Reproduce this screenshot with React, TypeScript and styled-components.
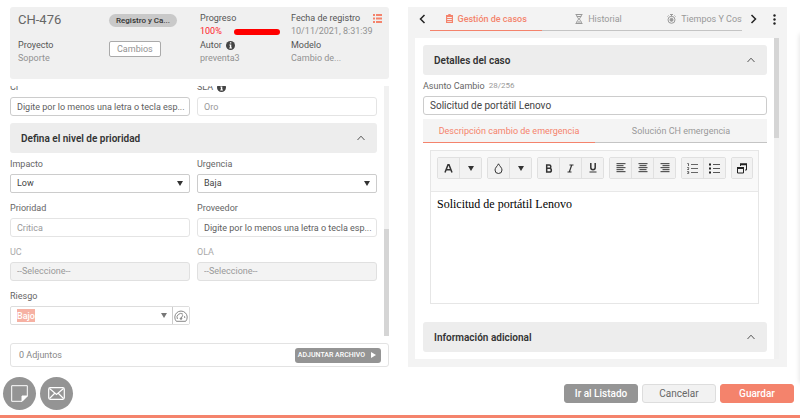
import React from "react";
import styled, { createGlobalStyle } from "styled-components";

const coral = "#f4836c";
const sans = `Roboto, "Liberation Sans", sans-serif`;

const GlobalStyle = createGlobalStyle`
  *, *::before, *::after { box-sizing: border-box; }
  body { margin: 0; background: #fff; font-family: ${sans}; font-size: 9px; color: #666; }
  button, input, select, textarea { font: inherit; color: inherit; margin: 0; }
  button { cursor: pointer; }
  svg { display: block; flex: none; }
`;

const Page = styled.div`
  position: relative;
  height: 100vh;
  min-height: 400px;
  display: flex;
  flex-direction: column;
  overflow: hidden;
  border-bottom: 3px solid ${coral};
`;

const DrawerEdge = styled.div`
  position: absolute;
  top: 34px;
  bottom: 32px;
  right: -4px;
  width: 4px;
  box-shadow: 0 0 5px rgba(0, 0, 0, 0.15);
`;

const Main = styled.main`
  flex: 1;
  min-height: 0;
  display: grid;
  grid-template-columns: 1fr 1fr;
  gap: 19px;
  padding: 7px 13px 0 10px;
`;

const LeftPane = styled.section`
  min-width: 0;
  min-height: 0;
  display: flex;
  flex-direction: column;
  gap: 7px;
`;

const Summary = styled.header`
  display: grid;
  grid-template-columns: repeat(4, 1fr);
  padding: 4px 7px 14px 8px;
  border-radius: 3px;
  background: #f0f0f0;
`;

const SummaryColumn = styled.div<{ $gap?: number }>`
  min-width: 0;
  display: flex;
  flex-direction: column;
  align-items: flex-start;
  gap: ${(p) => p.$gap ?? 0}px;
  line-height: 13px;
`;

const CaseId = styled.h1`
  margin: 0;
  font-size: 13px;
  font-weight: 400;
  line-height: 17px;
  color: #666;
  padding-bottom: 10px;
`;

const Term = styled.div`
  display: flex;
  align-items: center;
  justify-content: space-between;
  align-self: stretch;
  line-height: 14px;
  color: #555;
`;

const TermInline = styled(Term)`
  justify-content: flex-start;
  gap: 4px;
`;

const Detail = styled.div<{ $color?: string }>`
  white-space: nowrap;
  color: ${(p) => p.$color ?? "#929292"};
`;

const Pill = styled.div`
  margin-top: 3px;
  padding: 0 7px;
  border-radius: 7px;
  background: #c9c9c9;
  color: #333;
  font-size: 8px;
  font-weight: 500;
  white-space: nowrap;
`;

const Tag = styled.button`
  padding: 0 7px;
  border: 1px solid #aaa;
  border-radius: 2px;
  background: #fff;
  color: #929292;
  line-height: 14px;
`;

const ProgressLine = styled.div`
  display: flex;
  align-items: center;
  gap: 12px;
  color: #ff1a2a;
`;

const ProgressBar = styled.div`
  width: 46px;
  height: 6px;
  border-radius: 3px;
  background: #f00;
`;

const ListButton = styled.button`
  padding: 0;
  border: 0;
  background: none;
  color: ${coral};
`;

const ScrollRow = styled.div`
  flex: 1;
  min-height: 0;
  display: flex;
  gap: 7px;
`;

const FormArea = styled.div`
  flex: 1;
  min-width: 0;
  overflow: hidden;
  display: flex;
  flex-direction: column;
  justify-content: flex-end;
  padding-bottom: 11px;
`;

const FieldGrid = styled.div`
  display: grid;
  grid-template-columns: 1fr 1fr;
  gap: 8px 7px;
`;

const Field = styled.div`
  min-width: 0;
  display: flex;
  flex-direction: column;
  gap: 3px;
`;

const Label = styled.label<{ $muted?: boolean }>`
  display: flex;
  align-items: center;
  gap: 4px;
  height: 14px;
  line-height: 14px;
  color: ${(p) => (p.$muted ? "#aaa" : "#666")};
`;

const Counter = styled.span`
  font-size: 8px;
  color: #999;
`;

const TextInput = styled.input<{ $muted?: boolean; $strong?: boolean }>`
  width: 100%;
  height: 19px;
  padding: 0 2px 0 6px;
  border: 1px solid ${(p) => (p.$strong ? "#ccc" : "#e4e4e4")};
  border-radius: 3px;
  background: #fff;
  color: ${(p) => (p.$muted ? "#999" : "#606060")};
  outline: 0;
`;

const SubjectInput = styled(TextInput)`
  font-size: 10px;
  color: #444;
`;

const SelectBox = styled.div`
  position: relative;
`;

const Select = styled.select`
  appearance: none;
  display: block;
  width: 100%;
  height: 19px;
  padding: 0 6px;
  border: 1px solid #ccc;
  border-radius: 2px;
  background: #fff;
  color: #444;
  line-height: 17px;
  opacity: 1;
  &:disabled {
    border-color: #e0e0e0;
    border-radius: 3px;
    background: #f3f3f3;
    color: #999;
  }
`;

const SelectArrow = styled.span`
  position: absolute;
  right: 7px;
  top: 7px;
  color: #333;
  pointer-events: none;
`;

const Combo = styled.div`
  display: flex;
  align-items: stretch;
  height: 19px;
  border: 1px solid #ddd;
  border-radius: 2px;
  padding-left: 6px;
`;

const ComboInput = styled.input`
  field-sizing: content;
  align-self: center;
  height: 13px;
  padding: 0;
  border: 0;
  outline: 0;
  background: #f6b1a3;
  color: #fff;
  font-weight: 500;
`;

const ComboArrow = styled.button`
  margin-left: auto;
  padding: 0 5px;
  border: 0;
  background: none;
  color: #777;
`;

const ComboAction = styled.button`
  padding: 0 1px;
  border: 0;
  border-left: 1px solid #ccc;
  background: #fff;
  color: #888;
`;

const SectionBar = styled.button`
  display: flex;
  align-items: center;
  justify-content: space-between;
  width: 100%;
  height: 30px;
  flex: none;
  padding: 0 12px 0 11px;
  border: 0;
  border-radius: 3px;
  background: #ededed;
  color: #333;
  font-size: 10px;
  font-weight: 600;
  text-align: left;
`;

const FormSection = styled(SectionBar)`
  margin: 7px 0 4px;
`;

const Track = styled.div<{ $align: "start" | "end" }>`
  width: 5px;
  flex: none;
  display: flex;
  align-items: ${(p) => p.$align};
  background: #f1f1f1;
`;

const Thumb = styled.div<{ $size: string }>`
  width: 100%;
  height: ${(p) => p.$size};
  background: #d5d5d5;
`;

const Attachments = styled.div`
  display: flex;
  align-items: center;
  justify-content: space-between;
  height: 24px;
  padding: 0 7px 0 8px;
  border: 1px solid #e3e3e3;
  border-radius: 3px;
  color: #888;
`;

const AttachButton = styled.button`
  display: flex;
  align-items: center;
  justify-content: space-between;
  gap: 6px;
  height: 15px;
  padding: 0 5px 0 3px;
  border: 0;
  border-radius: 3px;
  background: #949494;
  color: #fff;
  font-size: 7px;
  font-weight: 500;
`;

const RightPane = styled.section`
  min-width: 0;
  min-height: 0;
  display: flex;
  flex-direction: column;
  padding-bottom: 8px;
  background: #f3f3f3;
`;

const TabBar = styled.nav`
  display: flex;
  height: 24px;
  flex: none;
  margin-bottom: 7px;
  padding-left: 7px;
`;

const NavButton = styled.button<{ $width: number }>`
  flex: none;
  width: ${(p) => p.$width}px;
  display: grid;
  place-items: center;
  padding: 0;
  border: 0;
  background: none;
  color: #222;
`;

const TabList = styled.div`
  flex: 1;
  min-width: 0;
  display: flex;
  margin-right: 3px;
  overflow: hidden;
`;

const Tab = styled.button<{ $active?: boolean }>`
  flex: 0 0 36%;
  display: flex;
  align-items: center;
  justify-content: center;
  gap: 5px;
  padding: 0;
  border: 0;
  border-bottom: 1px solid ${(p) => (p.$active ? coral : "#c4c4c4")};
  background: none;
  color: ${(p) => (p.$active ? coral : "#999")};
  font-weight: ${(p) => (p.$active ? 500 : 400)};
  white-space: nowrap;
`;

const InnerTabs = styled.div`
  display: grid;
  grid-template-columns: 1fr 1fr;
  flex: none;
  height: 24px;
  margin: 4px 0 7px;
  background: #f4f4f4;
`;

const InnerTab = styled(Tab)`
  font-weight: 400;
`;

const Body = styled.div`
  flex: 1;
  min-height: 0;
  display: flex;
  gap: 7px;
  margin: 0 8px 0 7px;
  background: #fff;
`;

const BodyContent = styled.div`
  flex: 1;
  min-width: 0;
  overflow: hidden;
  display: flex;
  flex-direction: column;
  padding: 7px 0 7px 8px;
`;

const SubjectField = styled(Field)`
  margin-top: 4px;
`;

const Editor = styled.div`
  flex: 1;
  min-height: 120px;
  display: flex;
  flex-direction: column;
  margin: 0 8px 18px 7px;
  border: 1px solid #e6e6e6;
`;

const EditorToolbar = styled.div`
  display: flex;
  gap: 5px;
  padding: 6px 6px 12px;
  border-bottom: 1px solid #e8e8e8;
  background: #f9f9f9;
`;

const ToolGroup = styled.div`
  display: flex;
  border: 1px solid #e0e0e0;
  border-radius: 2px;
`;

const Tool = styled.button`
  width: 21px;
  height: 20px;
  display: grid;
  place-items: center;
  padding: 0;
  border: 0;
  background: #f2f2f2;
  color: #333;
  &:only-child { width: 20px; }
  & + & { width: 22px; border-left: 1px solid #e0e0e0; }
`;

const EditorText = styled.textarea`
  flex: 1;
  width: 100%;
  padding: 5px 6px;
  border: 0;
  outline: 0;
  resize: none;
  background: #fff;
  color: #000;
  font-family: "Liberation Serif", serif;
  font-size: 12px;
  line-height: 15px;
`;

const Footer = styled.footer`
  flex: none;
  display: flex;
  align-items: center;
  gap: 4px;
  height: 48px;
  padding: 4px 6px 0 3px;
`;

const RoundButton = styled.button`
  width: 33px;
  height: 33px;
  display: grid;
  place-items: center;
  padding: 0;
  border: 0;
  border-radius: 50%;
  background: #949494;
  color: #fff;
`;

const Actions = styled.div`
  display: flex;
  gap: 4px;
  margin-left: auto;
`;

const tones = {
  gray: { bg: "#959595", fg: "#fff", line: "#959595", weight: 500 },
  light: { bg: "#f2f2f2", fg: "#666", line: "#ddd", weight: 400 },
  coral: { bg: coral, fg: "#fff", line: coral, weight: 500 },
};

const ActionButton = styled.button<{ $tone: keyof typeof tones }>`
  width: 74px;
  height: 19px;
  padding: 0;
  border: 1px solid ${(p) => tones[p.$tone].line};
  border-radius: 3px;
  background: ${(p) => tones[p.$tone].bg};
  color: ${(p) => tones[p.$tone].fg};
  font-size: 10px;
  font-weight: ${(p) => tones[p.$tone].weight};
`;

const Triangle = () => (
  <svg width="6" height="5" viewBox="0 0 6 5"><path d="M0 0h6L3 5z" fill="currentColor" /></svg>
);

const ChevronUp = () => (
  <svg width="8" height="6" viewBox="0 0 8 6" fill="none" stroke="#555" strokeWidth="1">
    <path d="M.5 5 4 1.2 7.5 5" />
  </svg>
);

const InfoIcon = () => (
  <svg width="9" height="9" viewBox="0 0 9 9">
    <circle cx="4.5" cy="4.5" r="4.5" fill="#444" />
    <path d="M3.9 1.3h1.4v1.2H3.9zM3.4 3.4h1.9v3.1h.6v1H3.3v-1h.6V4.4h-.5z" fill="#fff" />
  </svg>
);

const AlignIcon = ({ kind }: { kind: "left" | "center" | "right" }) => (
  <svg width="10" height="10" viewBox="0 0 10 10" stroke="#555" strokeWidth="1.2">
    {[0, 1, 2, 3, 4].map((i) => {
      const length = i % 2 ? 7 : 9;
      const start = kind === "left" ? 0.5 : kind === "right" ? 9.5 - length : 5 - length / 2;
      return <path key={i} d={`M${start} ${i * 2 + 0.6}h${length}`} />;
    })}
  </svg>
);

type SelectFieldProps = { id: string; label: string; value: string; disabled?: boolean };

const SelectField = ({ id, label, value, disabled }: SelectFieldProps) => (
  <Field>
    <Label htmlFor={id} $muted={disabled}>{label}</Label>
    <SelectBox>
      <Select id={id} disabled={disabled} defaultValue={value}><option>{value}</option></Select>
      {!disabled && <SelectArrow><Triangle /></SelectArrow>}
    </SelectBox>
  </Field>
);

type TextFieldProps = { id: string; label: string; value: string; muted?: boolean; strong?: boolean; info?: boolean };

const TextField = ({ id, label, value, muted, strong, info }: TextFieldProps) => (
  <Field>
    <Label htmlFor={id}>{label}{info && <InfoIcon />}</Label>
    <TextInput id={id} defaultValue={value} $muted={muted} $strong={strong} />
  </Field>
);

export default function App() {
  return (
    <>
      <GlobalStyle />
      <Page>
        <Main>
          <LeftPane>
            <Summary>
              <SummaryColumn>
                <CaseId>CH-476</CaseId>
                <Term>Proyecto</Term>
                <Detail>Soporte</Detail>
              </SummaryColumn>
              <SummaryColumn $gap={14}>
                <Pill>Registro y Ca...</Pill>
                <Tag type="button">Cambios</Tag>
              </SummaryColumn>
              <SummaryColumn>
                <Term>Progreso</Term>
                <ProgressLine>100%<ProgressBar role="progressbar" aria-label="Progreso" aria-valuenow={100} /></ProgressLine>
                <TermInline>Autor<InfoIcon /></TermInline>
                <Detail>preventa3</Detail>
              </SummaryColumn>
              <SummaryColumn>
                <Term>
                  Fecha de registro
                  <ListButton type="button" aria-label="Lista">
                    <svg width="9" height="9" viewBox="0 0 9 9" fill="currentColor">
                      <path d="M0 0h2v2H0zM3 0h6v2H3zM0 3.5h2v2H0zM3 3.5h6v2H3zM0 7h2v2H0zM3 7h6v2H3z" />
                    </svg>
                  </ListButton>
                </Term>
                <Detail>10/11/2021, 8:31:39</Detail>
                <Term>Modelo</Term>
                <Detail>Cambio de...</Detail>
              </SummaryColumn>
            </Summary>

            <ScrollRow>
              <FormArea>
                <FieldGrid>
                  <TextField id="ci" label="CI" value="Digite por lo menos una letra o tecla esp..." strong />
                  <TextField id="sla" label="SLA" value="Oro" muted info />
                </FieldGrid>
                <FormSection type="button" aria-expanded="true">Defina el nivel de prioridad<ChevronUp /></FormSection>
                <FieldGrid>
                  <SelectField id="impacto" label="Impacto" value="Low" />
                  <SelectField id="urgencia" label="Urgencia" value="Baja" />
                  <TextField id="prioridad" label="Prioridad" value="Critica" muted />
                  <TextField id="proveedor" label="Proveedor" value="Digite por lo menos una letra o tecla esp..." />
                  <SelectField id="uc" label="UC" value="--Seleccione--" disabled />
                  <SelectField id="ola" label="OLA" value="--Seleccione--" disabled />
                  <Field>
                    <Label htmlFor="riesgo">Riesgo</Label>
                    <Combo>
                      <ComboInput id="riesgo" role="combobox" aria-expanded="false" defaultValue="Bajo" />
                      <ComboArrow type="button" aria-label="Abrir opciones"><Triangle /></ComboArrow>
                      <ComboAction type="button" aria-label="Calcular riesgo">
                        <svg width="14" height="12" viewBox="0 0 14 12" fill="none" stroke="currentColor">
                          <path d="M2.3 11.3a6.2 6.2 0 1 1 9.4 0z" />
                          <path d="M3.4 9A3.8 3.8 0 0 1 9 4.2M10.5 6.2 10.8 8M7 8.6l1.8-3.4" />
                          <circle cx="7" cy="8.6" r=".8" fill="currentColor" />
                        </svg>
                      </ComboAction>
                    </Combo>
                  </Field>
                </FieldGrid>
              </FormArea>
              <Track $align="end"><Thumb $size="43%" /></Track>
            </ScrollRow>

            <Attachments>
              0 Adjuntos
              <AttachButton type="button">
                ADJUNTAR ARCHIVO
                <svg width="5" height="6" viewBox="0 0 5 6"><path d="M0 0 5 3 0 6z" fill="currentColor" /></svg>
              </AttachButton>
            </Attachments>
          </LeftPane>

          <RightPane>
            <TabBar>
              <NavButton type="button" $width={15} aria-label="Anterior">
                <svg width="7" height="10" viewBox="0 0 7 10" fill="none" stroke="currentColor" strokeWidth="1.5"><path d="M5.5 1 1.5 5l4 4" /></svg>
              </NavButton>
              <TabList>
                <Tab type="button" $active>
                  <svg width="7" height="9" viewBox="0 0 7 9" fill="currentColor">
                    <path fillRule="evenodd" d="M2.3 0h2.4v1H7v8H0V1h2.3zM1.2 3v1h4.6V3zM1.2 5v1h4.6V5zM1.2 7v.8h4.6V7z" />
                  </svg>
                  Gestión de casos
                </Tab>
                <Tab type="button">
                  <svg width="8" height="10" viewBox="0 0 8 10" fill="none" stroke="currentColor">
                    <path d="M.5.5h7M.5 9.5h7M1.5.5c0 3 2 3 2 4.5s-2 1.5-2 4.5M6.5.5c0 3-2 3-2 4.5s2 1.5 2 4.5M2 2.5h4M2.5 8h3" />
                  </svg>
                  Historial
                </Tab>
                <Tab type="button">
                  <svg width="9" height="10" viewBox="0 0 9 10" fill="none" stroke="currentColor">
                    <circle cx="4.5" cy="5.8" r="3.5" />
                    <circle cx="4.5" cy="5.8" r="1.5" fill="currentColor" />
                    <path d="M3 .5h3M4.5.5v2M.5 2.5l1-1M8.5 2.5l-1-1" />
                  </svg>
                  Tiempos Y Costos
                </Tab>
              </TabList>
              <NavButton type="button" $width={16} aria-label="Siguiente">
                <svg width="7" height="10" viewBox="0 0 7 10" fill="none" stroke="currentColor" strokeWidth="1.5"><path d="m1.5 1 4 4-4 4" /></svg>
              </NavButton>
              <NavButton type="button" $width={26} aria-label="Más opciones">
                <svg width="3" height="11" viewBox="0 0 3 11" fill="currentColor">
                  <circle cx="1.5" cy="1.5" r="1.2" /><circle cx="1.5" cy="5.5" r="1.2" /><circle cx="1.5" cy="9.5" r="1.2" />
                </svg>
              </NavButton>
            </TabBar>

            <Body>
              <BodyContent>
                <SectionBar type="button" aria-expanded="true">Detalles del caso<ChevronUp /></SectionBar>
                <SubjectField>
                  <Label htmlFor="asunto">Asunto Cambio <Counter>28/256</Counter></Label>
                  <SubjectInput id="asunto" defaultValue="Solicitud de portátil Lenovo" $strong />
                </SubjectField>
                <InnerTabs>
                  <InnerTab type="button" $active>Descripción cambio de emergencia</InnerTab>
                  <InnerTab type="button">Solución CH emergencia</InnerTab>
                </InnerTabs>
                <Editor>
                  <EditorToolbar role="toolbar" aria-label="Formato">
                    <ToolGroup>
                      <Tool type="button" aria-label="Color de texto">
                        <svg width="9" height="9" viewBox="0 0 9 9" fill="none" stroke="currentColor" strokeWidth="1.5"><path d="M1 8.5 4 .8h1l3 7.7M2.3 5.7h4.4" /></svg>
                      </Tool>
                      <Tool type="button" aria-label="Elegir color de texto"><Triangle /></Tool>
                    </ToolGroup>
                    <ToolGroup>
                      <Tool type="button" aria-label="Color de fondo">
                        <svg width="9" height="11" viewBox="0 0 9 11" fill="none" stroke="currentColor"><path d="M4.5.8C3.5 3 1 4.7 1 7a3.5 3.5 0 0 0 7 0C8 4.7 5.5 3 4.5.8z" /></svg>
                      </Tool>
                      <Tool type="button" aria-label="Elegir color de fondo"><Triangle /></Tool>
                    </ToolGroup>
                    <ToolGroup>
                      <Tool type="button" aria-label="Negrita">
                        <svg width="8" height="9" viewBox="0 0 8 9" fill="none" stroke="currentColor" strokeWidth="1.5"><path d="M1.7 1h2.5a1.6 1.6 0 0 1 0 3.3H1.7zM1.7 4.3h2.8a1.8 1.8 0 0 1 0 3.7H1.7z" /></svg>
                      </Tool>
                      <Tool type="button" aria-label="Cursiva">
                        <svg width="7" height="9" viewBox="0 0 7 9" fill="none" stroke="currentColor"><path d="M2.5 1h4M.5 8h4M4.7 1 2.3 8" strokeWidth="1.2" /></svg>
                      </Tool>
                      <Tool type="button" aria-label="Subrayado">
                        <svg width="8" height="10" viewBox="0 0 8 10" fill="none" stroke="currentColor"><path d="M1.8 0v4.5a2.2 2.2 0 0 0 4.4 0V0" strokeWidth="1.5" /><path d="M.5 9h7" /></svg>
                      </Tool>
                    </ToolGroup>
                    <ToolGroup>
                      <Tool type="button" aria-label="Alinear a la izquierda"><AlignIcon kind="left" /></Tool>
                      <Tool type="button" aria-label="Centrar"><AlignIcon kind="center" /></Tool>
                      <Tool type="button" aria-label="Alinear a la derecha"><AlignIcon kind="right" /></Tool>
                    </ToolGroup>
                    <ToolGroup>
                      <Tool type="button" aria-label="Lista numerada">
                        <svg width="11" height="11" viewBox="0 0 11 11" fill="none" stroke="#666">
                          <path d="M4 1.5h7M4 5.5h7M4 9.5h7M.3.5h1.2v2.5M.2 4.5h1.5v1L.4 6.5h1.6M.2 8.5h1.5v2H.2M.8 9.5h1" />
                        </svg>
                      </Tool>
                      <Tool type="button" aria-label="Lista con viñetas">
                        <svg width="11" height="11" viewBox="0 0 11 11" fill="none" stroke="#555">
                          <path d="M4 1.5h7M4 5.5h7M4 9.5h7" /><path d="M0 1.5h2M0 5.5h2M0 9.5h2" stroke="#222" strokeWidth="2" />
                        </svg>
                      </Tool>
                    </ToolGroup>
                    <ToolGroup>
                      <Tool type="button" aria-label="Abrir en ventana">
                        <svg width="10" height="11" viewBox="0 0 10 11" fill="none" stroke="#222">
                          <path d="M.5 5h6v5h-6z" /><path d="M0 5h7M3 1.2h7" strokeWidth="2" /><path d="M3.5 1v2M9.5 1v6H8" />
                        </svg>
                      </Tool>
                    </ToolGroup>
                  </EditorToolbar>
                  <EditorText aria-label="Descripción" defaultValue="Solicitud de portátil Lenovo" />
                </Editor>
                <SectionBar type="button" aria-expanded="true">Información adicional<ChevronUp /></SectionBar>
              </BodyContent>
              <Track $align="start"><Thumb $size="31%" /></Track>
            </Body>
          </RightPane>
        </Main>

        <Footer>
          <RoundButton type="button" aria-label="Notas">
            <svg width="17" height="17" viewBox="0 0 17 17" fill="none" stroke="currentColor">
              <path d="M.7.7h15.600v10.300l-5.300 5.300H.7z" /><path d="M11 16.300V11h5.300z" fill="currentColor" />
            </svg>
          </RoundButton>
          <RoundButton type="button" aria-label="Correo">
            <svg width="17" height="13" viewBox="0 0 17 13" fill="none" stroke="currentColor" strokeWidth="1.2">
              <rect x=".7" y=".7" width="15.6" height="11.6" rx="1.5" /><path d="m1.5 1.5 7 6 7-6M1.5 11.5l5-5M15.5 11.5l-5-5" />
            </svg>
          </RoundButton>
          <Actions>
            <ActionButton type="button" $tone="gray">Ir al Listado</ActionButton>
            <ActionButton type="button" $tone="light">Cancelar</ActionButton>
            <ActionButton type="button" $tone="coral">Guardar</ActionButton>
          </Actions>
        </Footer>
        <DrawerEdge />
      </Page>
    </>
  );
}
